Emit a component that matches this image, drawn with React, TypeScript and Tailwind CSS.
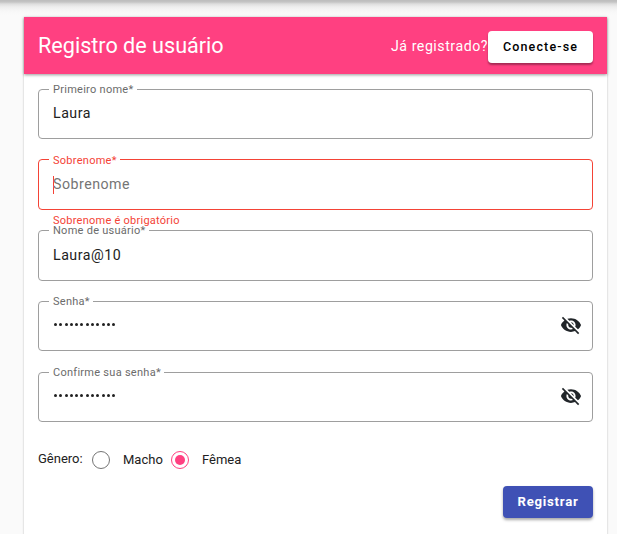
import React from "react";
import { MdVisibilityOff } from "react-icons/md";

type FieldProps = {
  label: string;
  labelWidth: string;
  box: string;
  error?: boolean;
  children: React.ReactNode;
};

function Field({ label, labelWidth, box, error, children }: FieldProps) {
  return (
    <div
      className={`relative flex items-center rounded-[4px] border pl-[14px] pr-[10px] text-[14.2px] tracking-[0.5px] ${box} ${
        error ? "border-[#f44336]" : "border-[#9e9e9e]"
      }`}
    >
      <span
        className={`absolute left-[10px] h-[11px] whitespace-nowrap bg-white pl-[4px] text-[11px] leading-[11px] tracking-[0.27px] ${labelWidth} ${
          error ? "-top-[5px] text-[#f44336]" : "-top-[6px] text-[#6b6b6b]"
        }`}
      >
        {label}
      </span>
      {children}
    </div>
  );
}

function Dots() {
  return (
    <span className="-mt-[3px] ml-px flex gap-[2.3px]">
      {Array.from({ length: 12 }, (_, i) => (
        <span key={i} className="size-[3px] rounded-full bg-[#212121]" />
      ))}
    </span>
  );
}

export default function App() {
  return (
    <div className="h-[534px] overflow-hidden bg-[#fafafa] font-[Roboto,sans-serif] text-[#212121]">
      <div className="h-[17px] bg-[linear-gradient(#bcbcbc_0px,#c4c4c4_2px,#dedede_4px,#eeeeee_7px,#f7f7f7_11px,#fafafa_15px)]" />
      <main className="ml-[24px] h-[540px] w-[583px] bg-white shadow-[0_1px_2px_rgba(0,0,0,0.25)]">
        <header className="flex h-[57px] items-center bg-[#ff4081] px-[14px] text-white shadow-[0_1px_3px_rgba(0,0,0,0.4)]">
          <h1 className="grow text-[21.6px] leading-[28px]">Registro de usuário</h1>
          <span className="mt-[3px] text-[14.2px] tracking-[0.52px]">Já registrado?</span>
          <button className="mt-[3px] h-[32px] w-[105px] rounded-[4px] bg-white text-[12.5px] font-medium tracking-[1.15px] text-black shadow-[0_2px_2px_rgba(0,0,0,0.35)]">
            Conecte-se
          </button>
        </header>
        <form className="px-[14px] pt-[15px]">
          <Field label="Primeiro nome*" labelWidth="w-[88px]" box="h-[50px]">
            <span>Laura</span>
          </Field>
          <Field label="Sobrenome*" labelWidth="w-[71px]" box="mt-[20px] h-[51px]" error>
            <span className="mt-px flex items-center text-[#757575]">
              <span className="-mr-px h-[18px] w-px bg-[#f44336]" />
              Sobrenome
            </span>
          </Field>
          <div className="relative z-10 h-[20px] pl-[15px] pt-[5px] text-[11px] leading-[11px] tracking-[0.25px] text-[#f44336]">
            Sobrenome é obrigatório
          </div>
          <Field label="Nome de usuário*" labelWidth="w-[100px]" box="h-[51px]">
            <span className="mt-px">Laura@10</span>
          </Field>
          <Field label="Senha*" labelWidth="w-[44px]" box="mt-[20px] h-[50px]">
            <Dots />
            <MdVisibilityOff className="-mt-[2px] ml-auto size-[22px] text-[#212529]" />
          </Field>
          <Field label="Confirme sua senha*" labelWidth="w-[115px]" box="mt-[21px] h-[50px]">
            <Dots />
            <MdVisibilityOff className="-mt-[2px] ml-auto size-[22px] text-[#212529]" />
          </Field>
          <div className="mt-[28px] flex h-[20px] items-center text-[13px]">
            <span className="-mt-[2px] w-[54px]">Gênero:</span>
            <span className="size-[18px] rounded-full border border-[#757575]" />
            <span className="ml-[13px] w-[48px]">Macho</span>
            <span className="flex size-[18px] items-center justify-center rounded-full border border-[#ff4081]">
              <span className="size-[10px] rounded-full bg-[#ff4081]" />
            </span>
            <span className="ml-[13px]">Fêmea</span>
          </div>
          <div className="mt-[16px] flex justify-end">
            <button className="h-[32px] w-[90px] rounded-[4px] bg-[#3f51b5] text-[13.2px] font-bold tracking-[0.75px] text-white shadow-[0_2px_3px_rgba(0,0,0,0.35)]">
              Registrar
            </button>
          </div>
        </form>
      </main>
    </div>
  );
}
